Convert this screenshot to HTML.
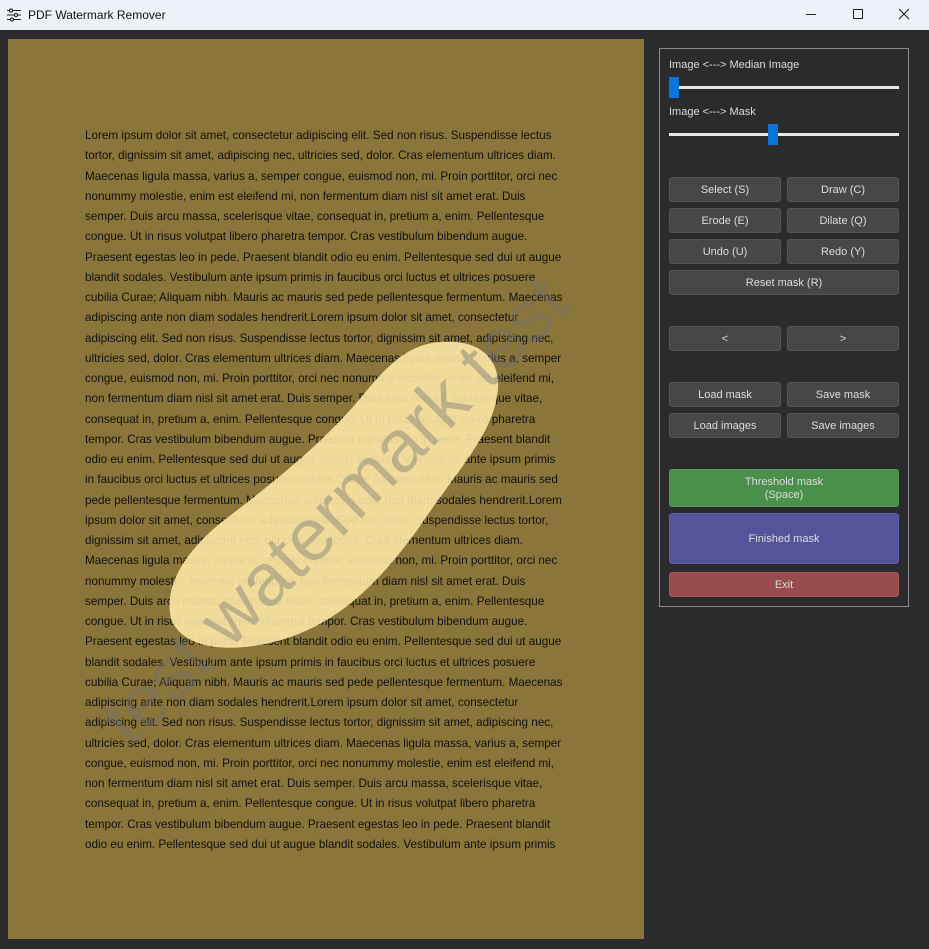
<!DOCTYPE html>
<html><head><meta charset="utf-8"><style>
*{margin:0;padding:0;box-sizing:border-box}
body{width:929px;height:949px;background:#2b2b2e;font-family:"Liberation Sans",sans-serif;position:relative;overflow:hidden}
.title{position:absolute;left:0;top:0;width:929px;height:30px;background:#eff1f8;color:#111;font-size:12px}
.page{position:absolute;left:8px;top:39px;width:636px;height:900px;background:#8a753a;overflow:hidden}
.txt{position:absolute;left:77px;top:87px;font-size:11.7px;line-height:20.25px;color:#111;white-space:nowrap}
.panel{position:absolute;left:659px;top:48px;width:250px;height:559px;border:1px solid #8a8a8a}
.lbl{position:absolute;left:9px;color:#ddd;font-size:11px}
.track{position:absolute;left:9px;width:230px;height:3px;background:#e8e8e8}
.thumb{position:absolute;width:10px;height:21px;background:#0a74d8}
.b{position:absolute;height:25px;padding-top:2px;background:#474747;border:1px solid #555;border-radius:3px;color:#ddd;font-size:11px;display:flex;align-items:center;justify-content:center;text-align:center;line-height:13px}
.l{left:9px;width:112px}.r{left:127px;width:112px}.w{left:9px;width:230px}
</style></head><body>
<div class="title">
<svg style="position:absolute;left:6px;top:8px" width="16" height="14" viewBox="0 0 16 14" fill="none" stroke="#222" stroke-width="1.1"><path d="M1 2.5h14M1 7h14M1 11.5h14"/><circle cx="5" cy="2.5" r="1.6" fill="#eff1f8"/><circle cx="10" cy="7" r="1.6" fill="#eff1f8"/><circle cx="6" cy="11.5" r="1.6" fill="#eff1f8"/></svg>
<span style="position:absolute;left:28px;top:8px">PDF Watermark Remover</span>
<div style="position:absolute;left:806px;top:14px;width:10px;height:1px;background:#222"></div>
<div style="position:absolute;left:853px;top:9px;width:10px;height:10px;border:1px solid #222"></div>
<svg style="position:absolute;left:898px;top:8px" width="12" height="12" stroke="#222" stroke-width="1.1"><path d="M1 1L11 11M11 1L1 11"/></svg>
</div>
<div class="page">
<div class="txt">
Lorem ipsum dolor sit amet, consectetur adipiscing elit. Sed non risus. Suspendisse lectus<br>
tortor, dignissim sit amet, adipiscing nec, ultricies sed, dolor. Cras elementum ultrices diam.<br>
Maecenas ligula massa, varius a, semper congue, euismod non, mi. Proin porttitor, orci nec<br>
nonummy molestie, enim est eleifend mi, non fermentum diam nisl sit amet erat. Duis<br>
semper. Duis arcu massa, scelerisque vitae, consequat in, pretium a, enim. Pellentesque<br>
congue. Ut in risus volutpat libero pharetra tempor. Cras vestibulum bibendum augue.<br>
Praesent egestas leo in pede. Praesent blandit odio eu enim. Pellentesque sed dui ut augue<br>
blandit sodales. Vestibulum ante ipsum primis in faucibus orci luctus et ultrices posuere<br>
cubilia Curae; Aliquam nibh. Mauris ac mauris sed pede pellentesque fermentum. Maecenas<br>
adipiscing ante non diam sodales hendrerit.Lorem ipsum dolor sit amet, consectetur<br>
adipiscing elit. Sed non risus. Suspendisse lectus tortor, dignissim sit amet, adipiscing nec,<br>
ultricies sed, dolor. Cras elementum ultrices diam. Maecenas ligula massa, varius a, semper<br>
congue, euismod non, mi. Proin porttitor, orci nec nonummy molestie, enim est eleifend mi,<br>
non fermentum diam nisl sit amet erat. Duis semper. Duis arcu massa, scelerisque vitae,<br>
consequat in, pretium a, enim. Pellentesque congue. Ut in risus volutpat libero pharetra<br>
tempor. Cras vestibulum bibendum augue. Praesent egestas leo in pede. Praesent blandit<br>
odio eu enim. Pellentesque sed dui ut augue blandit sodales. Vestibulum ante ipsum primis<br>
in faucibus orci luctus et ultrices posuere cubilia Curae; Aliquam nibh. Mauris ac mauris sed<br>
pede pellentesque fermentum. Maecenas adipiscing ante non diam sodales hendrerit.Lorem<br>
ipsum dolor sit amet, consectetur adipiscing elit. Sed non risus. Suspendisse lectus tortor,<br>
dignissim sit amet, adipiscing nec, ultricies sed, dolor. Cras elementum ultrices diam.<br>
Maecenas ligula massa, varius a, semper congue, euismod non, mi. Proin porttitor, orci nec<br>
nonummy molestie, enim est eleifend mi, non fermentum diam nisl sit amet erat. Duis<br>
semper. Duis arcu massa, scelerisque vitae, consequat in, pretium a, enim. Pellentesque<br>
congue. Ut in risus volutpat libero pharetra tempor. Cras vestibulum bibendum augue.<br>
Praesent egestas leo in pede. Praesent blandit odio eu enim. Pellentesque sed dui ut augue<br>
blandit sodales. Vestibulum ante ipsum primis in faucibus orci luctus et ultrices posuere<br>
cubilia Curae; Aliquam nibh. Mauris ac mauris sed pede pellentesque fermentum. Maecenas<br>
adipiscing ante non diam sodales hendrerit.Lorem ipsum dolor sit amet, consectetur<br>
adipiscing elit. Sed non risus. Suspendisse lectus tortor, dignissim sit amet, adipiscing nec,<br>
ultricies sed, dolor. Cras elementum ultrices diam. Maecenas ligula massa, varius a, semper<br>
congue, euismod non, mi. Proin porttitor, orci nec nonummy molestie, enim est eleifend mi,<br>
non fermentum diam nisl sit amet erat. Duis semper. Duis arcu massa, scelerisque vitae,<br>
consequat in, pretium a, enim. Pellentesque congue. Ut in risus volutpat libero pharetra<br>
tempor. Cras vestibulum bibendum augue. Praesent egestas leo in pede. Praesent blandit<br>
odio eu enim. Pellentesque sed dui ut augue blandit sodales. Vestibulum ante ipsum primis
</div>
<svg style="position:absolute;left:0;top:0" width="636" height="900">
<path d="M432 303 C470 300 492 318 490 350 C486 395 450 430 410 490 C370 545 330 585 270 602 C220 615 175 610 163 580 C155 545 180 510 215 482 C270 440 320 400 360 350 C385 320 405 305 432 303 Z" fill="#ffeaa8" opacity="0.88"/>
<text x="0" y="0" transform="translate(330 475) rotate(-45)" text-anchor="middle" dominant-baseline="middle" font-family="Liberation Sans, sans-serif" font-size="74" fill="#707070" fill-opacity="0.4">test watermark test</text>
</svg>
</div>
<div class="panel">
<div class="lbl" style="top:10px">Image &lt;---&gt; Median Image</div>
<div class="track" style="top:37px"></div>
<div class="thumb" style="left:9px;top:28px"></div>
<div class="lbl" style="top:57px">Image &lt;---&gt; Mask</div>
<div class="track" style="top:84px"></div>
<div class="thumb" style="left:108px;top:75px"></div>
<div class="b l" style="top:128px">Select (S)</div><div class="b r" style="top:128px">Draw (C)</div>
<div class="b l" style="top:159px">Erode (E)</div><div class="b r" style="top:159px">Dilate (Q)</div>
<div class="b l" style="top:190px">Undo (U)</div><div class="b r" style="top:190px">Redo (Y)</div>
<div class="b w" style="top:221px">Reset mask (R)</div>
<div class="b l" style="top:277px">&lt;</div><div class="b r" style="top:277px">&gt;</div>
<div class="b l" style="top:333px">Load mask</div><div class="b r" style="top:333px">Save mask</div>
<div class="b l" style="top:364px">Load images</div><div class="b r" style="top:364px">Save images</div>
<div class="b w" style="top:420px;height:38px;background:#4a904a;border-color:#559955">Threshold mask<br>(Space)</div>
<div class="b w" style="top:464px;height:51px;background:#54549a;border-color:#5e5ea4">Finished mask</div>
<div class="b w" style="top:523px;height:25px;background:#984c4c;border-color:#a25555">Exit</div>
</div>
</body></html>
